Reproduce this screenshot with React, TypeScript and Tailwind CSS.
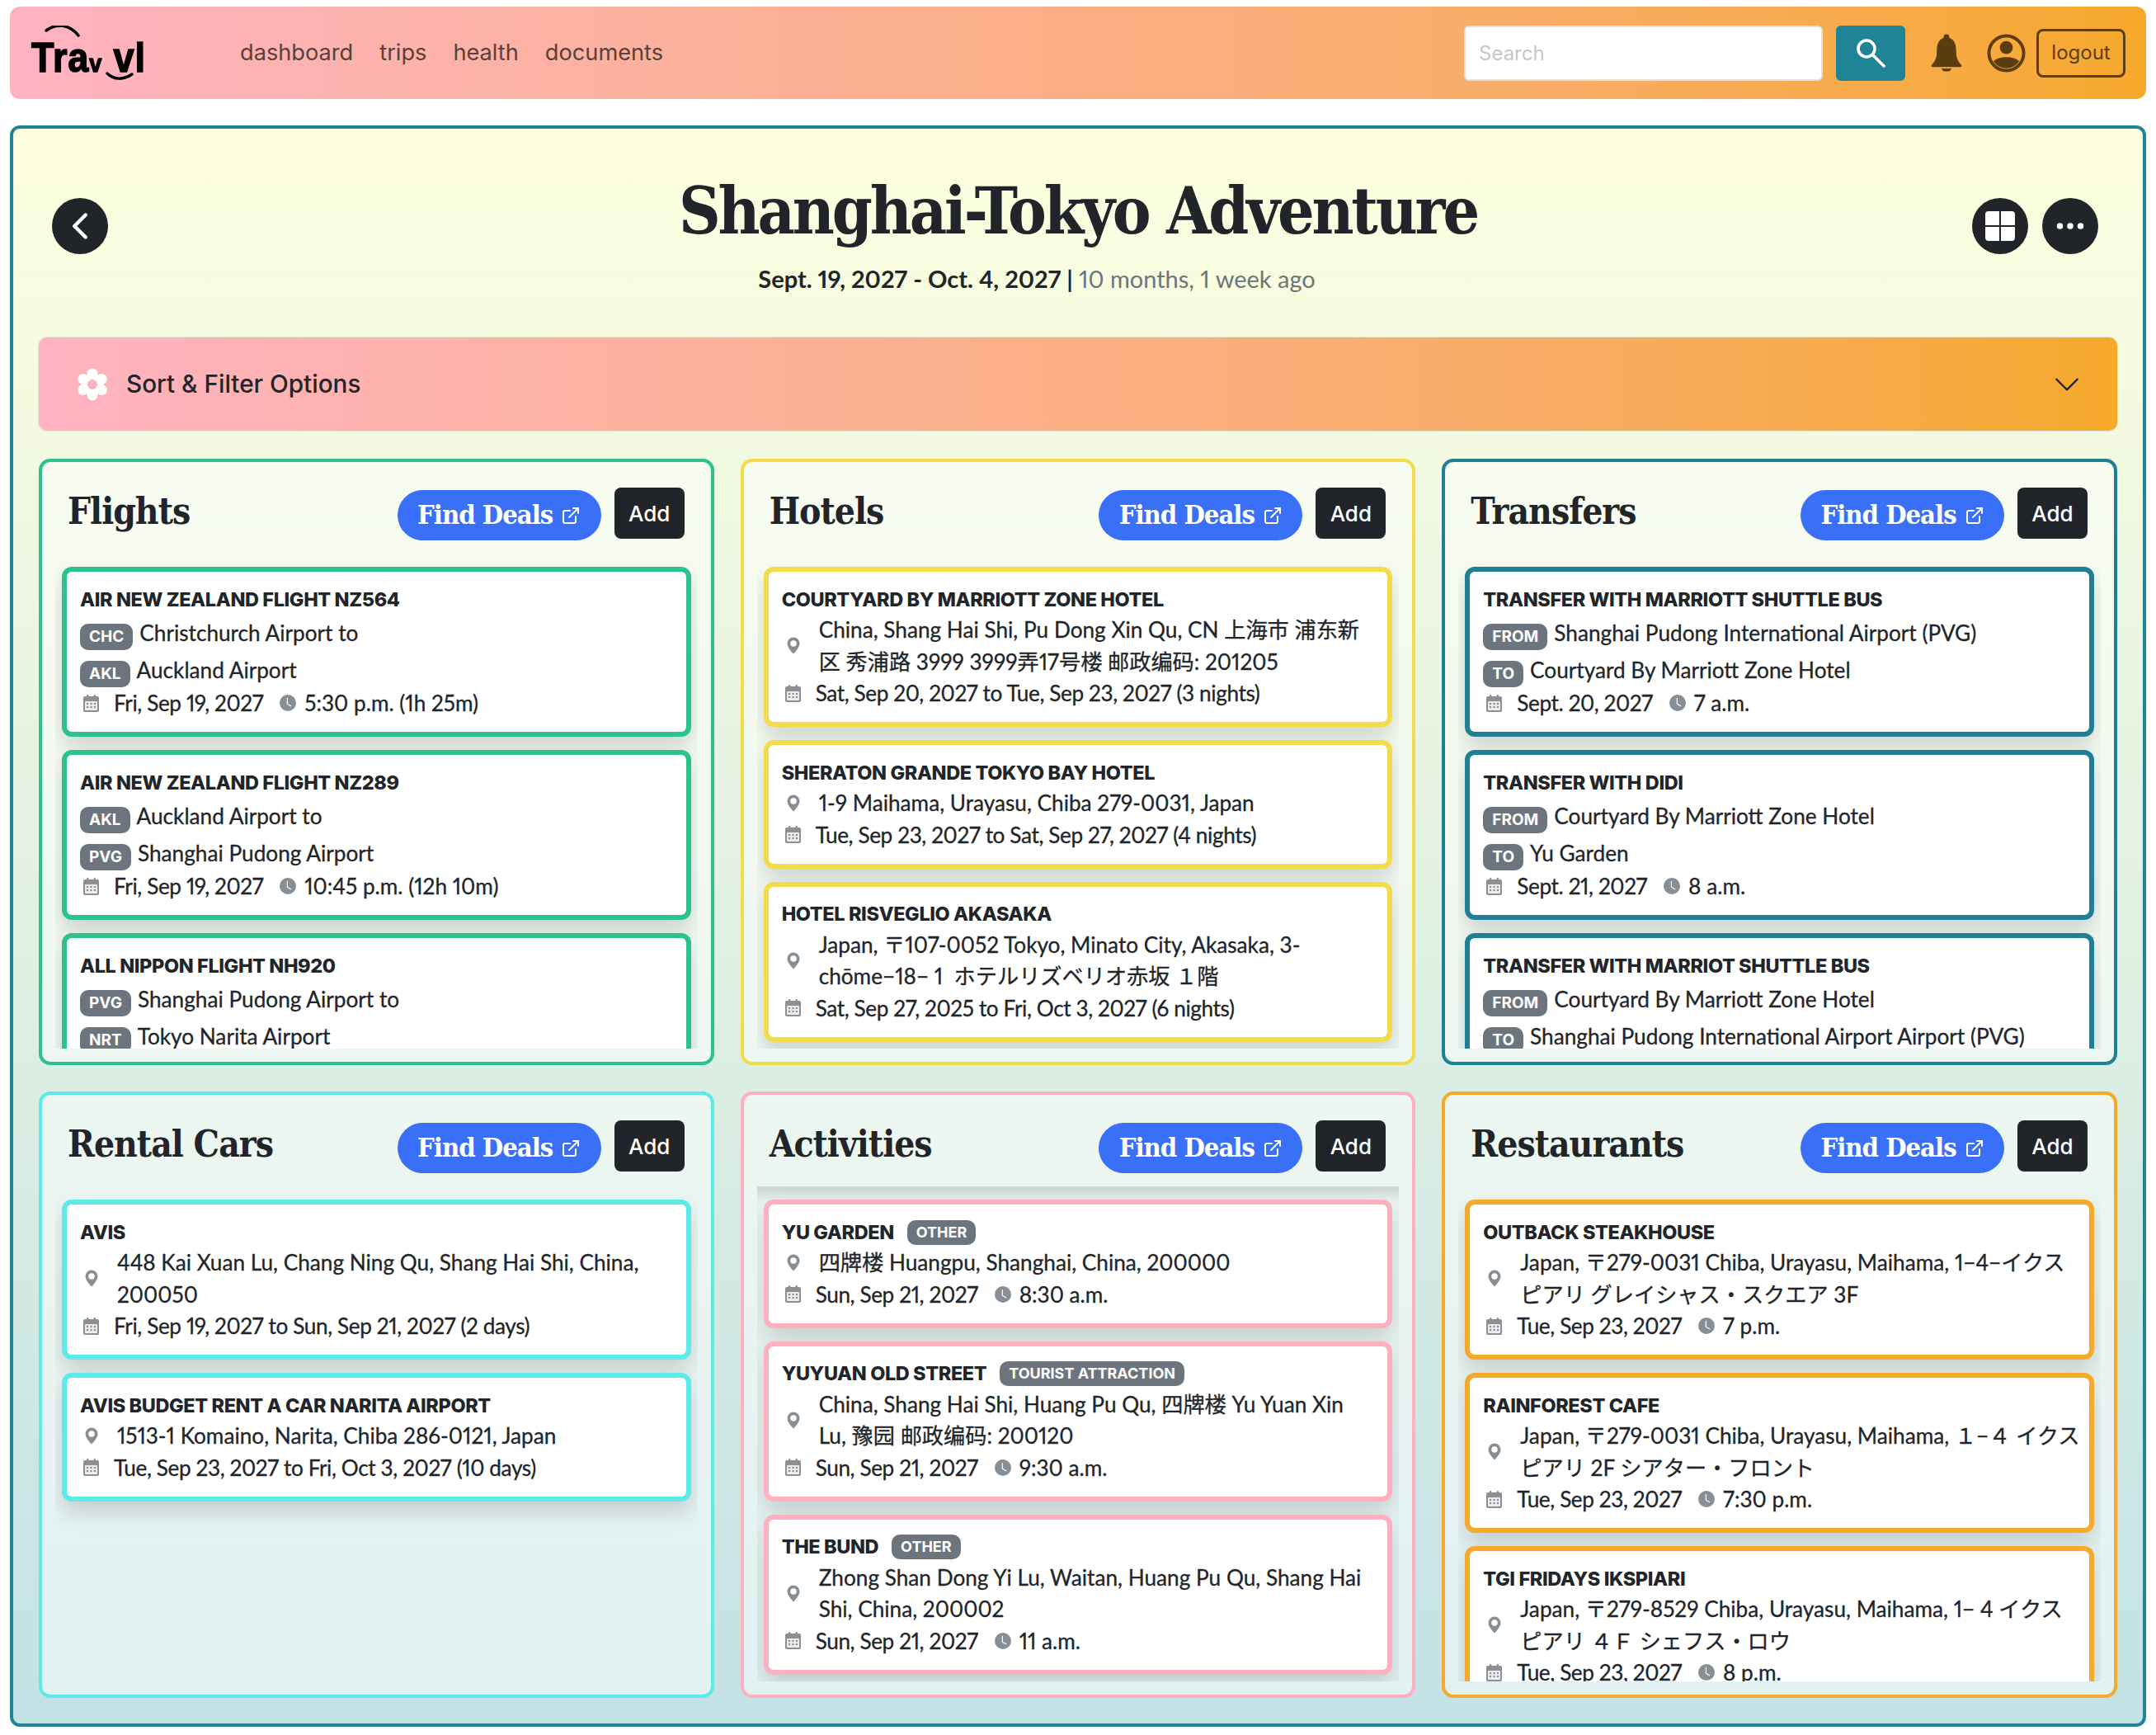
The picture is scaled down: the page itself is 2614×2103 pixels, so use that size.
import React from 'react'
import { ExternalLink } from 'lucide-react'
import { BsChevronDown, BsChevronLeft, BsClockFill, BsGeoAltFill, BsThreeDots } from 'react-icons/bs'

interface Entry {
  title: string
  tag?: string
  route?: [string, string][]
  address?: string[]
  date: string
  time?: string
}

interface SectionProps {
  name: string
  borderClass: string
  entries: Entry[]
  shaded?: boolean
}

const flights: Entry[] = [
  { title: 'Air New Zealand Flight NZ564', route: [['CHC', 'Christchurch Airport to'], ['AKL', 'Auckland Airport']], date: 'Fri, Sep 19, 2027', time: '5:30 p.m. (1h 25m)' },
  { title: 'Air New Zealand Flight NZ289', route: [['AKL', 'Auckland Airport to'], ['PVG', 'Shanghai Pudong Airport']], date: 'Fri, Sep 19, 2027', time: '10:45 p.m. (12h 10m)' },
  { title: 'All Nippon Flight NH920', route: [['PVG', 'Shanghai Pudong Airport to'], ['NRT', 'Tokyo Narita Airport']], date: 'Fri, Sep 19, 2027', time: '1:05 p.m.' },
]

const hotels: Entry[] = [
  { title: 'Courtyard By Marriott Zone Hotel', address: ['China, Shang Hai Shi, Pu Dong Xin Qu, CN 上海市 浦东新', '区 秀浦路 3999 3999弄17号楼 邮政编码: 201205'], date: 'Sat, Sep 20, 2027 to Tue, Sep 23, 2027 (3 nights)' },
  { title: 'Sheraton Grande Tokyo Bay Hotel', address: ['1-9 Maihama, Urayasu, Chiba 279-0031, Japan'], date: 'Tue, Sep 23, 2027 to Sat, Sep 27, 2027 (4 nights)' },
  { title: 'Hotel Risveglio Akasaka', address: ['Japan, 〒107-0052 Tokyo, Minato City, Akasaka, 3-', 'chōme−18− 1  ホテルリズベリオ赤坂 １階'], date: 'Sat, Sep 27, 2025 to Fri, Oct 3, 2027 (6 nights)' },
]

const transfers: Entry[] = [
  { title: 'Transfer With Marriott Shuttle Bus', route: [['FROM', 'Shanghai Pudong International Airport (PVG)'], ['TO', 'Courtyard By Marriott Zone Hotel']], date: 'Sept. 20, 2027', time: '7 a.m.' },
  { title: 'Transfer With DiDi', route: [['FROM', 'Courtyard By Marriott Zone Hotel'], ['TO', 'Yu Garden']], date: 'Sept. 21, 2027', time: '8 a.m.' },
  { title: 'Transfer With Marriot Shuttle Bus', route: [['FROM', 'Courtyard By Marriott Zone Hotel'], ['TO', 'Shanghai Pudong International Airport Airport (PVG)']], date: 'Sept. 23, 2027', time: '9 a.m.' },
]

const rentals: Entry[] = [
  { title: 'Avis', address: ['448 Kai Xuan Lu, Chang Ning Qu, Shang Hai Shi, China,', '200050'], date: 'Fri, Sep 19, 2027 to Sun, Sep 21, 2027 (2 days)' },
  { title: 'Avis Budget Rent A Car Narita Airport', address: ['1513-1 Komaino, Narita, Chiba 286-0121, Japan'], date: 'Tue, Sep 23, 2027 to Fri, Oct 3, 2027 (10 days)' },
]

const activities: Entry[] = [
  { title: 'Yu Garden', tag: 'Other', address: ['四牌楼 Huangpu, Shanghai, China, 200000'], date: 'Sun, Sep 21, 2027', time: '8:30 a.m.' },
  { title: 'Yuyuan Old Street', tag: 'Tourist Attraction', address: ['China, Shang Hai Shi, Huang Pu Qu, 四牌楼 Yu Yuan Xin', 'Lu, 豫园 邮政编码: 200120'], date: 'Sun, Sep 21, 2027', time: '9:30 a.m.' },
  { title: 'The Bund', tag: 'Other', address: ['Zhong Shan Dong Yi Lu, Waitan, Huang Pu Qu, Shang Hai', 'Shi, China, 200002'], date: 'Sun, Sep 21, 2027', time: '11 a.m.' },
]

const restaurants: Entry[] = [
  { title: 'Outback Steakhouse', address: ['Japan, 〒279-0031 Chiba, Urayasu, Maihama, 1−4−イクス', 'ピアリ グレイシャス・スクエア 3F'], date: 'Tue, Sep 23, 2027', time: '7 p.m.' },
  { title: 'Rainforest Cafe', address: ['Japan, 〒279-0031 Chiba, Urayasu, Maihama, １−４ イクス', 'ピアリ 2F シアター・フロント'], date: 'Tue, Sep 23, 2027', time: '7:30 p.m.' },
  { title: 'TGI Fridays Ikspiari', address: ['Japan, 〒279-8529 Chiba, Urayasu, Maihama, 1− 4 イクス', 'ピアリ ４Ｆ シェフス・ロウ'], date: 'Tue, Sep 23, 2027', time: '8 p.m.' },
]

const serif = "font-['DejaVu_Serif',serif] font-bold [font-stretch:condensed]"
const inter = "font-['Inter','Noto_Sans_CJK_JP',sans-serif]"

const CalendarIcon: React.FC = () => (
  <svg viewBox="0 0 19 21" className="ml-1 h-[21px] w-[19px] shrink-0">
    <rect x="0" y="2" width="19" height="19" rx="2" fill="#8c8f93" />
    <rect x="4" y="0" width="2.4" height="4" rx="1" fill="#8c8f93" />
    <rect x="12.6" y="0" width="2.4" height="4" rx="1" fill="#8c8f93" />
    <rect x="2" y="8" width="15" height="11" rx="1" fill="#eceded" />
    {[5, 9.5, 14].map((x) =>
      [11, 15].map((y) => <rect key={`${x}-${y}`} x={x - 1.1} y={y - 1.1} width="2.2" height="2.2" fill="#8c8f93" />),
    )}
  </svg>
)

const EntryCard: React.FC<{ entry: Entry; borderClass: string }> = ({ entry, borderClass }) => (
  <div className={`shrink-0 rounded-[12px] border-[6px] bg-white px-4 py-4 text-[26.2px] leading-[38px] text-[#212529] shadow-[0_13px_27px_rgba(0,0,0,0.15)] [-webkit-text-stroke:0.3px_#212529] ${borderClass}`}>
    <div className={`${inter} flex h-[35px] items-center [-webkit-text-stroke:0]`}>
      <span className="text-[23.5px] font-extrabold tracking-[-0.4px] uppercase whitespace-nowrap">{entry.title}</span>
      {entry.tag && (
        <span className="ml-4 rounded-[10px] bg-[#6c757d] px-[11px] py-[3px] text-[18px] leading-[24px] font-bold text-white uppercase whitespace-nowrap">{entry.tag}</span>
      )}
    </div>
    {entry.route?.map(([code, place]) => (
      <div key={code + place} className="flex h-[44.5px] items-center pt-[2px] whitespace-nowrap">
        <span className={`${inter} mt-[10px] mr-2 rounded-[10px] bg-[#6c757d] px-[11px] text-[19px] leading-[32px] font-bold text-white [-webkit-text-stroke:0]`}>{code}</span>
        <span>{place}</span>
      </div>
    ))}
    {entry.address && (
      <div className="flex items-center leading-[38.5px] whitespace-pre">
        <BsGeoAltFill className="ml-1 h-[23px] w-[20px] shrink-0 text-[#868e96]" />
        <div className="ml-[21px]">
          {entry.address.map((line) => (
            <div key={line}>{line}</div>
          ))}
        </div>
      </div>
    )}
    <div className="flex h-[38px] items-center whitespace-nowrap">
      <CalendarIcon />
      <span className="ml-[18px] tracking-[-0.4px]">{entry.date}</span>
      {entry.time && (
        <>
          <BsClockFill className="ml-[20px] h-[20px] w-[20px] shrink-0 text-[#868e96]" />
          <span className="ml-[10px]">{entry.time}</span>
        </>
      )}
    </div>
  </div>
)

const Section: React.FC<SectionProps> = ({ name, borderClass, entries, shaded }) => (
  <section className={`flex h-[735px] flex-col rounded-[14px] border-4 bg-white/50 px-4 pb-4 ${borderClass}`}>
    <div className="flex h-[111px] shrink-0 items-start justify-between pt-[34px] pr-[16px] pl-[15px]">
      <h2 className={`${serif} -translate-y-[2px] text-[44px] leading-[56px] tracking-[-1px] text-[#212529]`}>{name}</h2>
      <div className="flex gap-4">
        <a className={`${serif} flex h-[61px] w-[247px] items-center justify-center gap-[10px] rounded-full bg-[#3a6ff7] text-[32.5px] tracking-[-1px] text-white`}>
          Find Deals
          <ExternalLink className="h-[24px] w-[24px]" strokeWidth={2} />
        </a>
        <button className={`${inter} h-[62px] w-[85px] -translate-y-[3px] rounded-[8px] bg-[#212529] text-[26px] font-medium text-white`}>Add</button>
      </div>
    </div>
    <div className={`flex min-h-0 flex-1 flex-col gap-4 overflow-hidden px-2 pt-4 ${shaded ? 'shadow-[inset_0_18px_14px_-8px_rgba(0,0,0,0.14)]' : ''}`}>
      {entries.map((entry) => (
        <EntryCard key={entry.title} entry={entry} borderClass={borderClass} />
      ))}
    </div>
  </section>
)

const Logo: React.FC = () => (
  <div className="relative h-[67px] w-[137px] text-black">
    <svg viewBox="0 0 137 67" className="absolute inset-0 h-full w-full" fill="none" stroke="black" strokeWidth="3.5" strokeLinecap="round">
      <path d="M18 6 C 30 -3, 46 -2, 57 12" />
      <path d="M92 58 C 100 66, 112 66, 122 59" />
    </svg>
    <span className="absolute top-[16px] left-0 origin-left scale-x-[0.9] font-['Liberation_Sans',sans-serif] text-[50px] leading-[46px] font-bold tracking-[1px] whitespace-nowrap [-webkit-text-stroke:1.5px_black]">
      Tra<span className="text-[30px]">v</span> vl
    </span>
  </div>
)

const App: React.FC = () => (
  <div className="min-h-[2103px] bg-white px-3 pt-2 font-['Lato','Noto_Sans_CJK_JP',sans-serif] proportional-nums">
    <nav className="flex h-[112px] items-center rounded-[12px] bg-gradient-to-r from-[#ffb3c1] to-[#f6a92a] pr-[25px] pl-[26px]">
      <Logo />
      <div className={`${inter} ml-[116px] flex gap-[32px] text-[27.2px] text-[#5b3f3b]`}>
        <a>dashboard</a>
        <a>trips</a>
        <a>health</a>
        <a>documents</a>
      </div>
      <div className={`${inter} ml-auto flex items-center`}>
        <input placeholder="Search" className="h-[67px] w-[435px] rounded-[6px] border-2 border-[#dee2e6] bg-white px-4 text-[24px] outline-none placeholder:text-[#c4c7ca]" />
        <button className="ml-4 flex h-[67px] w-[84px] items-center justify-center rounded-[6px] bg-[#1f8496]">
          <svg viewBox="0 0 36 36" className="h-[36px] w-[36px]" fill="none" stroke="white" strokeWidth="3.6" strokeLinecap="round">
            <circle cx="13" cy="13" r="10" />
            <path d="M21 21 L34 34" />
          </svg>
        </button>
        <svg viewBox="0 0 40 48" className="ml-[30px] h-[47px] w-[40px]" fill="#5c3d0f">
          <circle cx="20" cy="4" r="3.5" />
          <path d="M20 4 C10 5 8 13 8 22 C8 31 5 35 2 38 Q0 41 3 41 H37 Q40 41 38 38 C35 35 32 31 32 22 C32 13 30 5 20 4Z" />
          <path d="M14 43 H26 C26 48 14 48 14 43Z" />
        </svg>
        <svg viewBox="0 0 48 48" className="ml-[29px] h-[47px] w-[47px]" fill="#5c3d0f">
          <circle cx="24" cy="24" r="21.5" fill="none" stroke="#5c3d0f" strokeWidth="4" />
          <circle cx="24" cy="17" r="8" />
          <path d="M8 34 C14 27 34 27 40 34 A19 19 0 0 1 8 34Z" />
        </svg>
        <button className="ml-[13px] h-[59px] w-[108px] rounded-[8px] border-[3px] border-[#5c3d0f] text-[24px] text-[#5c3d0f]">logout</button>
      </div>
    </nav>
    <main className="mt-[32px] h-[1941px] rounded-[12px] border-4 border-[#1f8496] bg-gradient-to-b from-[#feffdf] to-[#c3e2e5] px-[31px]">
      <div className="relative flex h-[253px] flex-col items-center">
        <button className="absolute top-[84px] left-[16px] flex h-[68px] w-[68px] items-center justify-center rounded-full bg-[#212529]">
          <BsChevronLeft className="h-[36px] w-[36px] text-white [stroke-width:1px] [stroke:white]" />
        </button>
        <h1 className={`${serif} mt-[50px] text-[78px] leading-[100px] tracking-[-3.1px] text-[#212529]`}>Shanghai-Tokyo Adventure</h1>
        <p className="mt-[12px] mr-[100px] text-[29px] leading-[40px] font-bold text-[#212529]">
          Sept. 19, 2027 - Oct. 4, 2027 | <span className="font-normal text-[#6c757d]">10 months, 1 week ago</span>
        </p>
        <div className="absolute top-[84px] right-[23px] flex gap-[17px]">
          <button className="flex h-[68px] w-[68px] items-center justify-center rounded-full bg-[#212529]">
            <svg viewBox="0 0 36 36" className="h-[36px] w-[36px]" fill="white">
              <path d="M4 0h13v17H0V4a4 4 0 0 1 4-4zM19 0h13a4 4 0 0 1 4 4v13H19zM0 19h17v17H4a4 4 0 0 1-4-4zM19 19h17v13a4 4 0 0 1-4 4H19z" />
            </svg>
          </button>
          <button className="flex h-[68px] w-[68px] items-center justify-center rounded-full bg-[#212529]">
            <BsThreeDots className="h-[40px] w-[40px] text-white" />
          </button>
        </div>
      </div>
      <div className="flex h-[113px] items-center rounded-[10px] bg-gradient-to-r from-[#ffb3c1] to-[#f6a92a] pr-[44px] pl-[45px] shadow-[0_0_0_1px_rgba(0,0,0,0.08)]">
        <svg viewBox="0 0 40 40" className="h-[40px] w-[40px]" fill="white">
          <defs>
            <mask id="gear-hole">
              <rect width="40" height="40" fill="white" />
              <circle cx="20" cy="20" r="6" fill="black" />
            </mask>
          </defs>
          <g mask="url(#gear-hole)">
            <circle cx="20" cy="20" r="13" />
            <circle cx="20" cy="7" r="6.5" />
            <circle cx="20" cy="33" r="6.5" />
            <circle cx="8.7" cy="13.5" r="6.5" />
            <circle cx="31.3" cy="13.5" r="6.5" />
            <circle cx="8.7" cy="26.5" r="6.5" />
            <circle cx="31.3" cy="26.5" r="6.5" />
          </g>
        </svg>
        <span className={`${inter} ml-[21px] text-[29.7px] font-medium text-[#212529]`}>Sort &amp; Filter Options</span>
        <BsChevronDown className="ml-auto h-[34px] w-[34px] text-[#212529]" />
      </div>
      <div className="mt-[34px] grid grid-cols-3 gap-x-[32px] gap-y-[32px]">
        <Section name="Flights" borderClass="border-[#2bc28f]" entries={flights} />
        <Section name="Hotels" borderClass="border-[#f3dc4b]" entries={hotels} />
        <Section name="Transfers" borderClass="border-[#1f7f95]" entries={transfers} />
        <Section name="Rental Cars" borderClass="border-[#5cebe9]" entries={rentals} />
        <Section name="Activities" borderClass="border-[#ffb0c0]" entries={activities} shaded />
        <Section name="Restaurants" borderClass="border-[#f6a92a]" entries={restaurants} />
      </div>
    </main>
  </div>
)

export default App
